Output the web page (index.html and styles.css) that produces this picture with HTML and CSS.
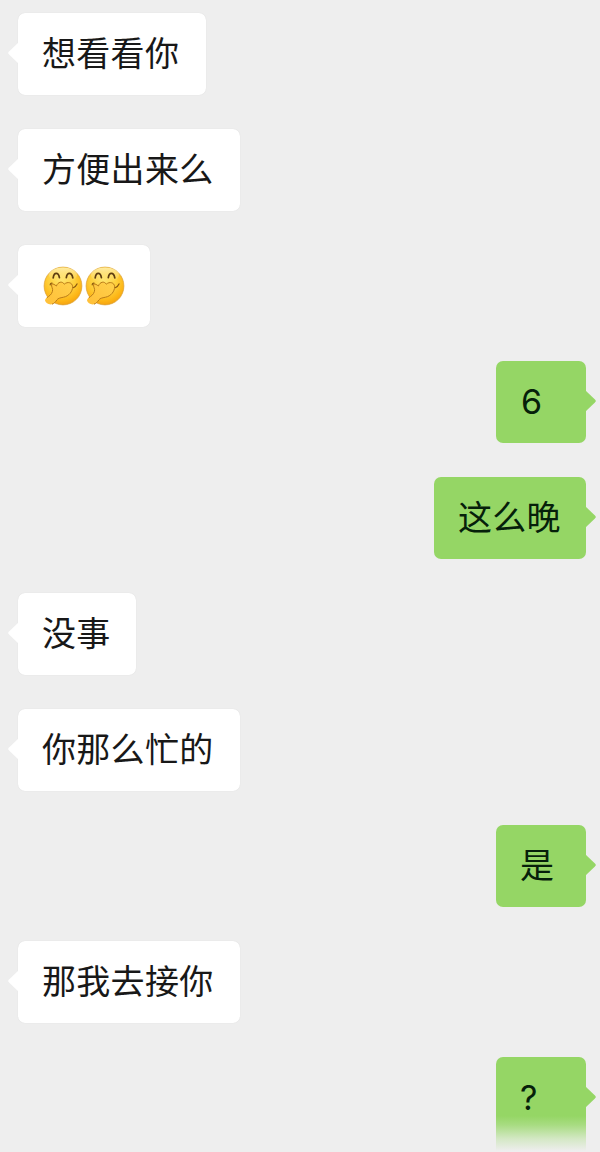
FILE: index.html
```
<!DOCTYPE html>
<html lang="zh-CN">
<head>
<meta charset="utf-8">
<title>聊天</title>
<link rel="stylesheet" href="styles.css">
</head>
<body>
<svg class="defs" aria-hidden="true">
  <defs>
    <radialGradient id="face" cx="46%" cy="34%" r="68%">
      <stop offset="0" stop-color="#ffe469"/>
      <stop offset=".5" stop-color="#fed03c"/>
      <stop offset=".82" stop-color="#fdb515"/>
      <stop offset="1" stop-color="#f2a012"/>
    </radialGradient>
    <linearGradient id="shine" x1="0" y1="0" x2="0" y2="1">
      <stop offset="0" stop-color="#fff0b5" stop-opacity=".85"/>
      <stop offset="1" stop-color="#ffe78c" stop-opacity="0"/>
    </linearGradient>
    <linearGradient id="hand" x1="1" y1="0" x2="0" y2="1">
      <stop offset="0" stop-color="#ffd04b"/>
      <stop offset="1" stop-color="#ffbf38"/>
    </linearGradient>
    <symbol id="giggle" viewBox="0 0 42 42">
      <circle cx="21" cy="21" r="18.9" fill="url(#face)" stroke="#d99e32" stroke-width=".7"/>
      <ellipse cx="21" cy="10" rx="14" ry="7.5" fill="url(#shine)"/>
      <path d="M11.2 12.8C12 7 16.4 7 17.4 12.6M24.3 12.6C25.2 7 29.6 7 30.8 12.8" fill="none" stroke="#5e3d10" stroke-width="1.7" stroke-linecap="round"/>
      <path d="M8.2 19.8Q8.4 18 10 18.2M31.3 22.7Q33.7 21.7 35 18.9" fill="none" stroke="#8a5810" stroke-width="1.2" stroke-linecap="round"/>
      <path d="M3 35.5C3.5 32.2 8.5 30.5 10.4 26.5C11.4 23.8 9 21.8 9.6 19.2C11.3 18.4 12.7 19.9 14.4 21C16 16.8 20.2 15.8 22.3 19.2C25.5 16.2 30.5 17.5 30.6 21.7C30.7 26.5 26.8 31.2 21.5 32.2C17.8 33 16.2 33.2 14.8 35C13 37.4 11.6 39.4 8.7 39.5C5.8 39.3 3.6 37.4 3 35.5Z" fill="url(#hand)"/>
      <path d="M4.8 32.8C7.2 31 9.6 29.5 10.4 26.5C11.4 23.8 9 21.8 9.6 19.2C11.3 18.4 12.7 19.9 14.4 21C16 16.8 20.2 15.8 22.3 19.2C25.5 16.2 30.5 17.5 30.6 21.7C30.7 26.5 26.8 31.2 21.5 32.2C17.8 33 16.2 33.2 14.8 35C13.4 37 12 38.6 10 39.2" fill="none" stroke="#b97a17" stroke-width="1"/>
    </symbol>
  </defs>
</svg>
<main class="chat">
  <div class="row"><div class="bubble w4">想看看你</div></div>
  <div class="row"><div class="bubble w5">方便出来么</div></div>
  <div class="row"><div class="bubble w-emoji"><svg class="emoji"><use href="#giggle"/></svg><svg class="emoji"><use href="#giggle"/></svg></div></div>
  <div class="row mine"><div class="bubble latin">6</div></div>
  <div class="row mine"><div class="bubble w3">这么晚</div></div>
  <div class="row"><div class="bubble w2">没事</div></div>
  <div class="row"><div class="bubble w5">你那么忙的</div></div>
  <div class="row mine"><div class="bubble">是</div></div>
  <div class="row"><div class="bubble w5">那我去接你</div></div>
  <div class="row mine"><div class="bubble latin fading">?</div></div>
</main>
</body>
</html>
```
FILE: styles.css
```
* { box-sizing: border-box; }
html, body { height: 1152px; overflow: hidden; }
body {
  margin: 0;
  background: #eeeeee;
  color: #181818;
  font-family: "Noto Sans CJK SC", sans-serif;
  font-size: 34px;
}
.defs { position: absolute; width: 0; height: 0; }
.chat {
  display: flex;
  flex-direction: column;
  gap: 34px;
  padding: 13px 14px 0 18px;
}
.row { display: flex; height: 82px; }
.mine { justify-content: flex-end; }
.bubble {
  --fill: #ffffff;
  position: relative;
  display: flex;
  align-items: center;
  width: 90px;
  height: 82px;
  padding: 0 0 4px 24px;
  border-radius: 7px;
  background: var(--fill);
  box-shadow: 0 0 1px rgba(0, 0, 0, .12);
  line-height: 50px;
  letter-spacing: .3px;
  white-space: nowrap;
}
.bubble::before {
  content: "";
  position: absolute;
  top: 29px;
  left: -10px;
  width: 11px;
  height: 22px;
  background: var(--fill);
  clip-path: polygon(100% 0, 12% 42%, 0 50%, 12% 58%, 100% 100%);
}
.mine .bubble { --fill: #95d665; color: #06200a; box-shadow: none; }
.mine .bubble::before { left: auto; right: -10px; transform: scaleX(-1); }
.w2 { width: 118px; }
.w3, .mine .w3 { width: 152px; }
.w4 { width: 188px; }
.w5 { width: 222px; }
.w-emoji { width: 132px; padding-bottom: 0; }
.emoji { width: 42px; height: 42px; flex: none; }
.latin { padding-bottom: 0; padding-left: 25px; font-family: Inter, sans-serif; }
.mine .fading {
  height: 95px;
  padding-bottom: 13px;
  padding-left: 24px;
  border-radius: 7px 7px 0 0;
  background: linear-gradient(#95d665 59px, #a8dc82 68px, #d4e8c5 82px, #eeeeee 94px);
}
```
